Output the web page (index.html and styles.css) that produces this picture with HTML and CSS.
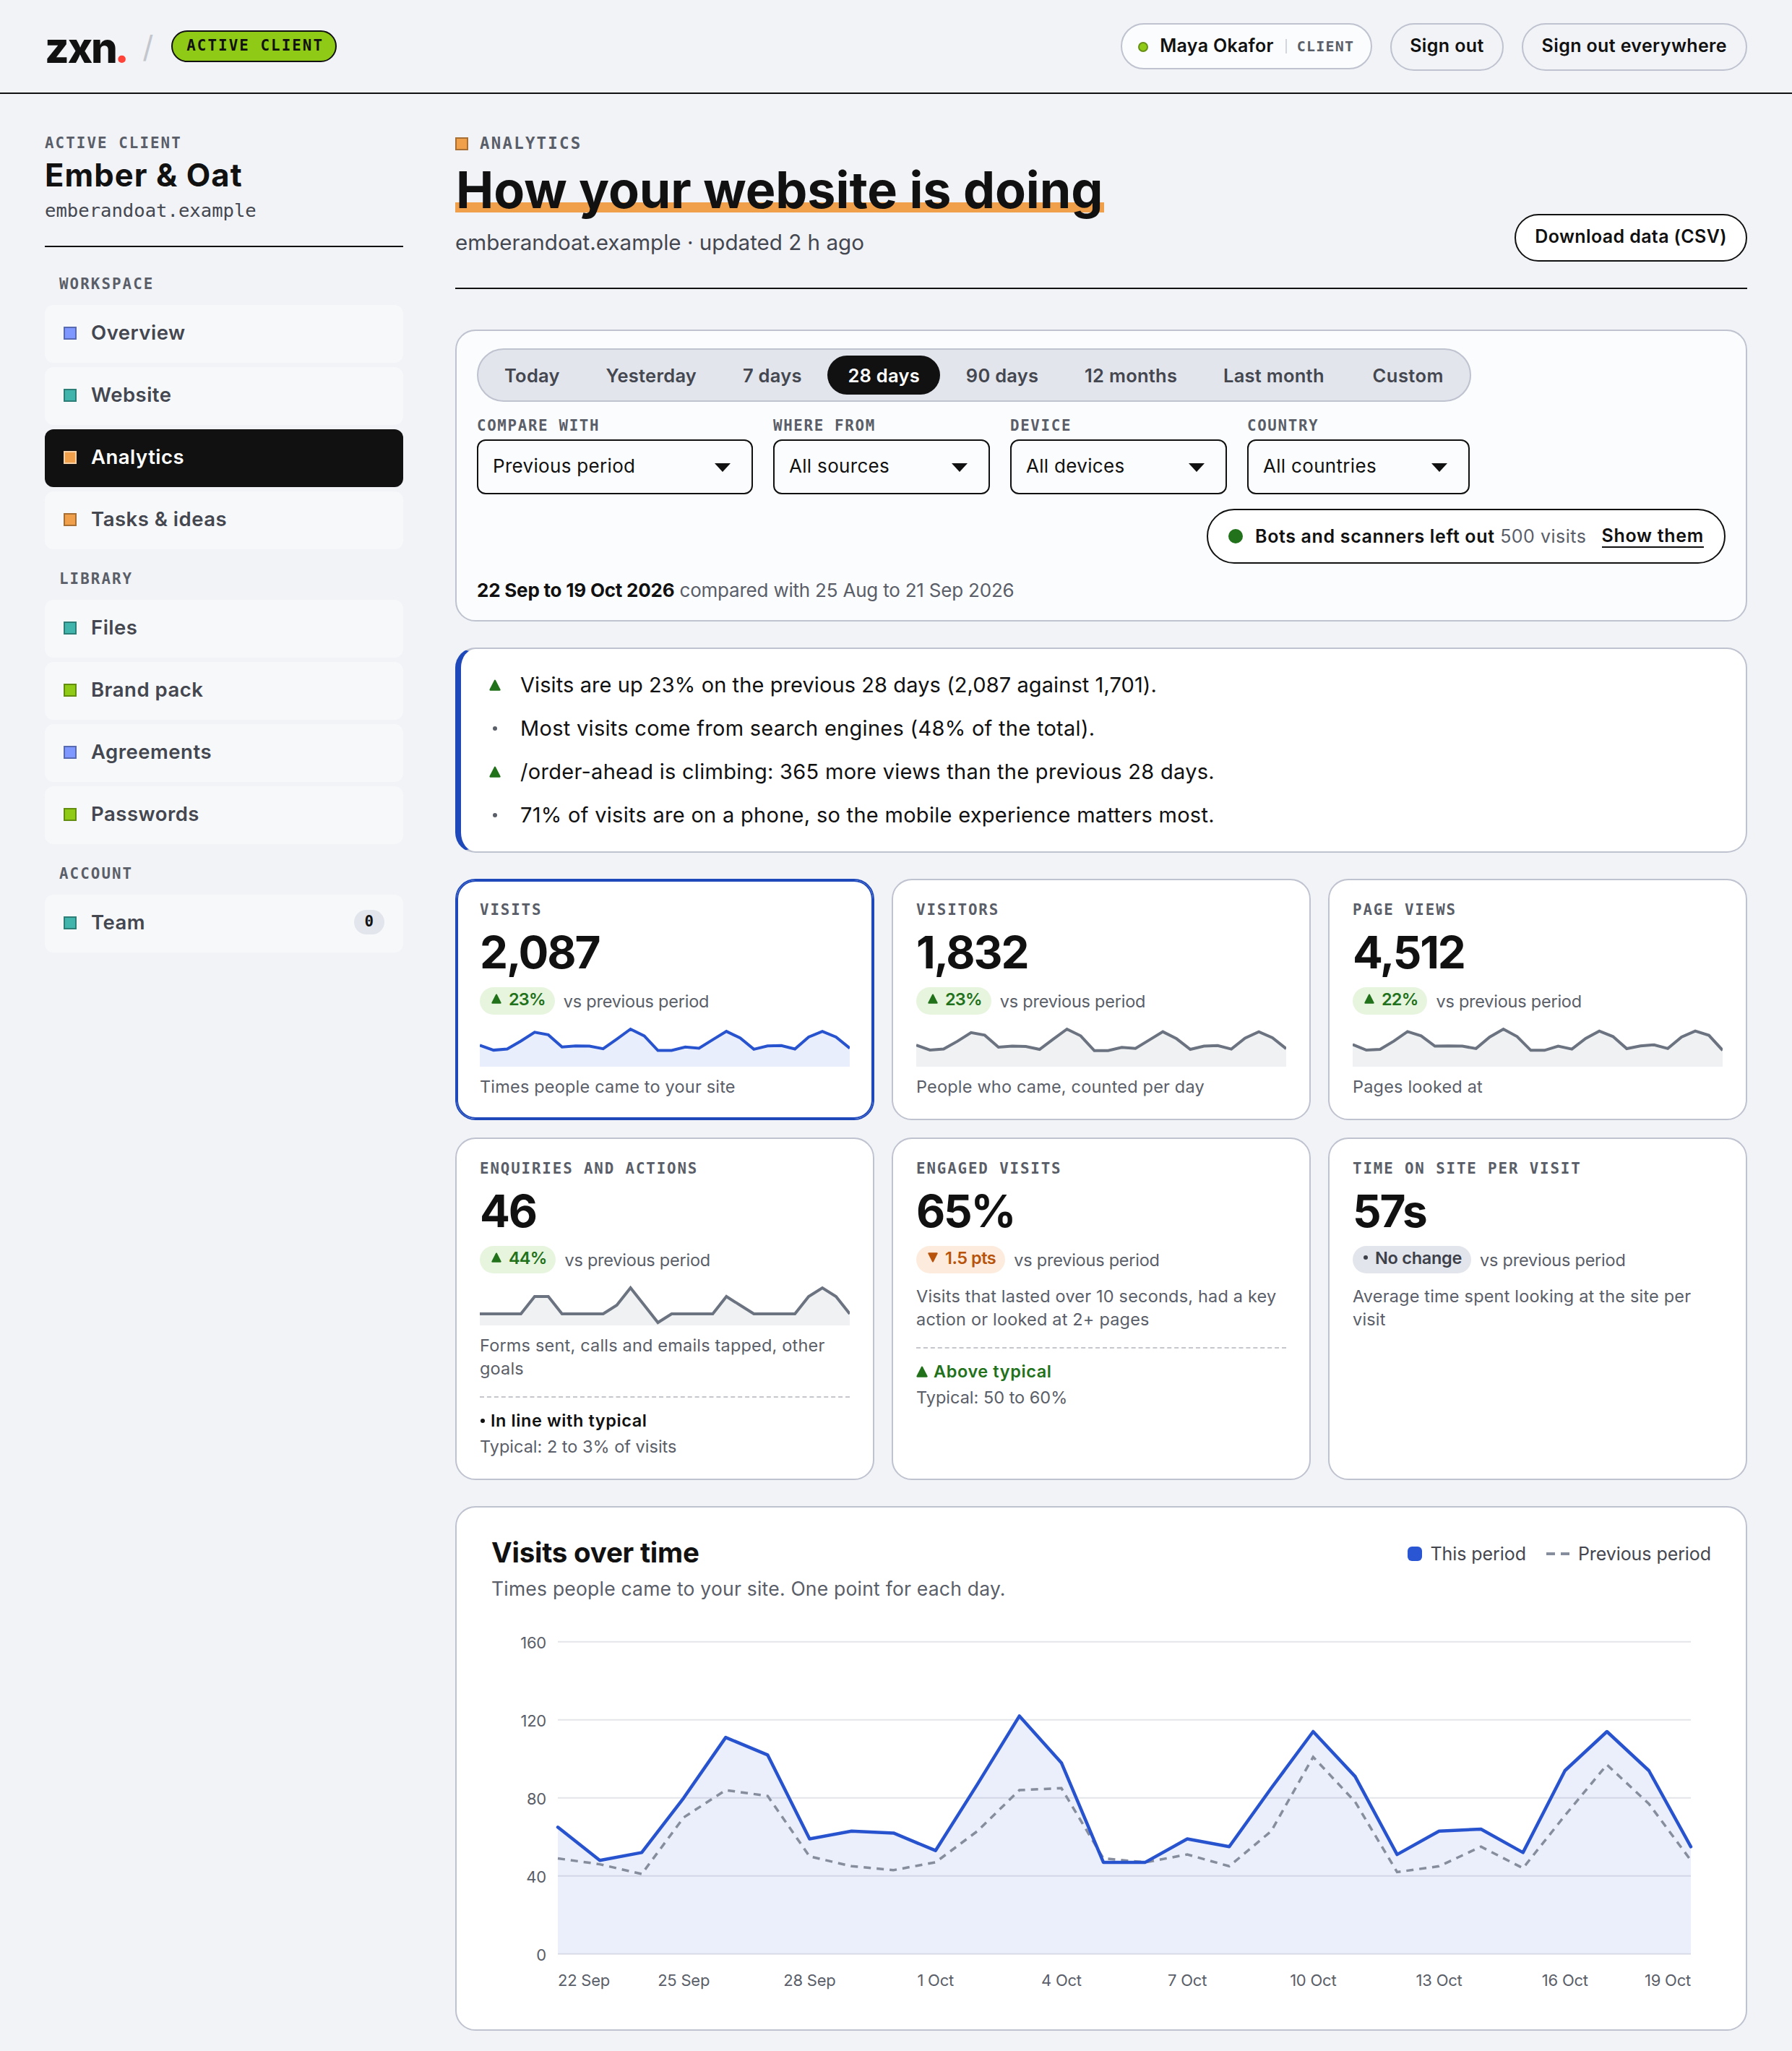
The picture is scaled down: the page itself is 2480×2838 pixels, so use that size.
FILE: index.html
```html
<!DOCTYPE html>
<html lang="en">
<head>
    <meta charset="UTF-8">
    <meta name="viewport" content="width=device-width, initial-scale=1.0">
    <title>Analytics - Ember &amp; Oat</title>
    <link rel="stylesheet" href="styles.css">
</head>
<body>
    <header class="topbar">
        <div class="brand">
            <span class="logo">zxn<span class="logo-dot">.</span></span>
            <span class="slash">/</span>
            <span class="status">ACTIVE CLIENT</span>
        </div>
        <div class="session">
            <div class="user">
                <span class="user-dot"></span>
                <span class="user-name">Maya Okafor</span>
                <span class="user-role">CLIENT</span>
            </div>
            <button class="pill slim">Sign out</button>
            <button class="pill">Sign out everywhere</button>
        </div>
    </header>

    <div class="layout">
        <aside class="sidebar">
            <div class="client">
                <p class="client-label">ACTIVE CLIENT</p>
                <p class="client-name">Ember &amp; Oat</p>
                <p class="client-domain">emberandoat.example</p>
            </div>
            <nav class="nav">
                <p class="nav-label">WORKSPACE</p>
                <a class="nav-item"><span class="square blue"></span>Overview</a>
                <a class="nav-item"><span class="square teal"></span>Website</a>
                <a class="nav-item active"><span class="square orange"></span>Analytics</a>
                <a class="nav-item"><span class="square orange"></span>Tasks &amp; ideas</a>
                <p class="nav-label">LIBRARY</p>
                <a class="nav-item"><span class="square teal"></span>Files</a>
                <a class="nav-item"><span class="square green"></span>Brand pack</a>
                <a class="nav-item"><span class="square blue"></span>Agreements</a>
                <a class="nav-item"><span class="square green"></span>Passwords</a>
                <p class="nav-label">ACCOUNT</p>
                <a class="nav-item"><span class="square teal"></span>Team<span class="count">0</span></a>
            </nav>
        </aside>

        <main class="main">
            <div class="page-head">
                <div>
                    <p class="eyebrow"><span class="square orange"></span>ANALYTICS</p>
                    <h1><span>How your website is doing</span></h1>
                    <p class="subtitle">emberandoat.example · updated 2 h ago</p>
                </div>
                <button class="pill dark">Download data (CSV)</button>
            </div>

            <section class="filters">
                <div class="segments">
                    <button>Today</button>
                    <button>Yesterday</button>
                    <button>7 days</button>
                    <button class="on">28 days</button>
                    <button>90 days</button>
                    <button>12 months</button>
                    <button>Last month</button>
                    <button>Custom</button>
                </div>
                <div class="fields">
                    <div class="field wide">
                        <span class="field-label">COMPARE WITH</span>
                        <div class="select">Previous period<svg width="22" height="12" viewBox="0 0 22 12"><path d="M0 0h22L11 12z"/></svg></div>
                    </div>
                    <div class="field">
                        <span class="field-label">WHERE FROM</span>
                        <div class="select">All sources<svg width="22" height="12" viewBox="0 0 22 12"><path d="M0 0h22L11 12z"/></svg></div>
                    </div>
                    <div class="field">
                        <span class="field-label">DEVICE</span>
                        <div class="select">All devices<svg width="22" height="12" viewBox="0 0 22 12"><path d="M0 0h22L11 12z"/></svg></div>
                    </div>
                    <div class="field country">
                        <span class="field-label">COUNTRY</span>
                        <div class="select">All countries<svg width="22" height="12" viewBox="0 0 22 12"><path d="M0 0h22L11 12z"/></svg></div>
                    </div>
                </div>
                <div class="bots">
                    <span class="bots-dot"></span>
                    <span class="bots-text"><strong>Bots and scanners left out</strong> 500 visits</span>
                    <a class="bots-link">Show them</a>
                </div>
                <p class="range"><strong>22 Sep to 19 Oct 2026</strong> compared with 25 Aug to 21 Sep 2026</p>
            </section>

            <ul class="insights">
                <li class="figures"><span class="marker"><svg class="tri" width="16" height="16" viewBox="0 0 14 14"><path d="M7 1.5 12.7 12.7H1.3z"/></svg></span>Visits are up 23% on the previous 28 days (2,087 against 1,701).</li>
                <li><span class="marker"><i class="bullet"></i></span>Most visits come from search engines (48% of the total).</li>
                <li><span class="marker"><svg class="tri" width="16" height="16" viewBox="0 0 14 14"><path d="M7 1.5 12.7 12.7H1.3z"/></svg></span>/order-ahead is climbing: 365 more views than the previous 28 days.</li>
                <li><span class="marker"><i class="bullet"></i></span>71% of visits are on a phone, so the mobile experience matters most.</li>
            </ul>

            <section class="cards">
                <article class="card selected">
                    <p class="card-label">VISITS</p>
                    <p class="number">2,087</p>
                    <p class="delta"><span class="chip up"><svg class="tri" width="14" height="14" viewBox="0 0 14 14"><path d="M7 1.5 12.7 12.7H1.3z"/></svg>23%</span>vs previous period</p>
                    <svg class="spark" id="spark-visits" viewBox="0 0 512 56"></svg>
                    <p class="desc">Times people came to your site</p>
                </article>
                <article class="card">
                    <p class="card-label">VISITORS</p>
                    <p class="number">1,832</p>
                    <p class="delta"><span class="chip up"><svg class="tri" width="14" height="14" viewBox="0 0 14 14"><path d="M7 1.5 12.7 12.7H1.3z"/></svg>23%</span>vs previous period</p>
                    <svg class="spark" id="spark-visitors" viewBox="0 0 512 56"></svg>
                    <p class="desc">People who came, counted per day</p>
                </article>
                <article class="card">
                    <p class="card-label">PAGE VIEWS</p>
                    <p class="number">4,512</p>
                    <p class="delta"><span class="chip up"><svg class="tri" width="14" height="14" viewBox="0 0 14 14"><path d="M7 1.5 12.7 12.7H1.3z"/></svg>22%</span>vs previous period</p>
                    <svg class="spark" id="spark-views" viewBox="0 0 512 56"></svg>
                    <p class="desc">Pages looked at</p>
                </article>
                <article class="card">
                    <p class="card-label">ENQUIRIES AND ACTIONS</p>
                    <p class="number">46</p>
                    <p class="delta"><span class="chip up"><svg class="tri" width="14" height="14" viewBox="0 0 14 14"><path d="M7 1.5 12.7 12.7H1.3z"/></svg>44%</span>vs previous period</p>
                    <svg class="spark" id="spark-actions" viewBox="0 0 512 56"></svg>
                    <p class="desc">Forms sent, calls and emails tapped, other goals</p>
                    <div class="typical">
                        <p class="verdict"><i class="bullet"></i>In line with typical</p>
                        <p>Typical: 2 to 3% of visits</p>
                    </div>
                </article>
                <article class="card">
                    <p class="card-label">ENGAGED VISITS</p>
                    <p class="number">65%</p>
                    <p class="delta"><span class="chip down"><svg class="tri" width="14" height="14" viewBox="0 0 14 14"><path d="M7 12.5 12.7 1.3H1.3z"/></svg>1.5 pts</span>vs previous period</p>
                    <p class="desc after-delta">Visits that lasted over 10 seconds, had a key action or looked at 2+ pages</p>
                    <div class="typical">
                        <p class="verdict good"><svg class="tri" width="16" height="16" viewBox="0 0 14 14"><path d="M7 1.5 12.7 12.7H1.3z"/></svg>Above typical</p>
                        <p>Typical: 50 to 60%</p>
                    </div>
                </article>
                <article class="card">
                    <p class="card-label">TIME ON SITE PER VISIT</p>
                    <p class="number">57s</p>
                    <p class="delta"><span class="chip flat"><i class="bullet"></i>No change</span>vs previous period</p>
                    <p class="desc after-delta">Average time spent looking at the site per visit</p>
                </article>
            </section>

            <section class="chart-card">
                <div class="chart-head">
                    <div>
                        <h2>Visits over time</h2>
                        <p class="chart-sub">Times people came to your site. One point for each day.</p>
                    </div>
                    <div class="legend">
                        <span class="legend-square"></span>This period
                        <svg class="legend-dash" width="32" height="4" viewBox="0 0 32 4"><path d="M0 2h12M20 2h12"/></svg>Previous period
                    </div>
                </div>
                <svg class="chart" id="chart" viewBox="0 0 1688 530"></svg>
            </section>
        </main>
    </div>

    <script>
        const visits = [65, 48, 52, 80, 111, 102, 59, 63, 62, 53, 87, 122, 98, 47, 47, 59, 55, 85, 114, 91, 51, 63, 64, 52, 94, 114, 94, 55];
        const previous = [49, 46, 41, 70, 84, 81, 50, 45, 43, 47, 63, 84, 85, 49, 47, 51, 45, 63, 101, 78, 42, 45, 55, 44, 71, 97, 77, 48];
        const visitors = [58, 43, 46, 70, 97, 89, 52, 55, 54, 45, 77, 108, 87, 41, 41, 51, 48, 74, 100, 78, 45, 55, 57, 46, 80, 100, 81, 47];
        const views = [140, 100, 105, 165, 234, 203, 128, 130, 128, 111, 195, 252, 198, 98, 98, 128, 107, 184, 238, 198, 110, 130, 138, 111, 195, 238, 207, 98];
        const actions = [1, 1, 1, 1, 3, 3, 1, 1, 1, 1, 2, 4, 2, 0, 1, 1, 1, 1, 3, 2, 1, 1, 1, 1, 3, 4, 3, 1];

        // Small area line inside a card
        function drawSpark(id, data) {
            const max = Math.max(...data);
            const points = data.map((v, i) => `${(i * 512 / 27).toFixed(1)},${(52 - v / max * 48).toFixed(1)}`);
            document.getElementById(id).innerHTML =
                `<polygon class="area" points="0,56 ${points.join(" ")} 512,56"/><polyline class="line" points="${points.join(" ")}"/>`;
        }

        // Main chart
        function drawChart() {
            const x = i => (92 + i * 1568 / 27).toFixed(1);
            const y = v => (463.8 - v * 2.7).toFixed(1);
            const line = data => data.map((v, i) => `${x(i)},${y(v)}`).join(" ");
            const labels = ["22 Sep", "25 Sep", "28 Sep", "1 Oct", "4 Oct", "7 Oct", "10 Oct", "13 Oct", "16 Oct", "19 Oct"];
            let svg = "";

            for (let v = 0; v <= 160; v += 40) {
                svg += `<line class="grid" x1="92" x2="1660" y1="${y(v)}" y2="${y(v)}"/>`;
                svg += `<text x="76" y="${+y(v) + 9}" text-anchor="end">${v}</text>`;
            }
            labels.forEach((label, i) => {
                const anchor = i === 0 ? "start" : i === 9 ? "end" : "middle";
                svg += `<text x="${x(i * 3)}" y="508" text-anchor="${anchor}">${label}</text>`;
            });
            svg += `<polygon class="area" points="92,463.8 ${line(visits)} 1660,463.8"/>`;
            svg += `<polyline class="previous" points="${line(previous)}"/>`;
            svg += `<polyline class="line" points="${line(visits)}"/>`;
            document.getElementById("chart").innerHTML = svg;
        }

        drawSpark("spark-visits", visits);
        drawSpark("spark-visitors", visitors);
        drawSpark("spark-views", views);
        drawSpark("spark-actions", actions);
        drawChart();
    </script>
</body>
</html>
```

FILE: styles.css
```css
* {
    box-sizing: border-box;
}
body {
    margin: 0;
    background-color: #f1f3f7;
    color: #111;
    font-family: Inter, "Liberation Sans", sans-serif;
    font-size: 24px;
}
p, h1, h2, ul {
    margin: 0;
    padding: 0;
}
button {
    font-family: inherit;
    color: inherit;
    white-space: nowrap;
}

/* Top bar */
.topbar {
    display: flex;
    justify-content: space-between;
    height: 130px;
    padding: 32px 62px 30px;
    border-bottom: 2px solid #111;
}
.brand {
    display: flex;
    align-items: center;
}
.logo {
    padding-top: 2px;
    font-size: 58px;
    font-weight: 800;
    line-height: 66px;
    letter-spacing: -0.035em;
}
.logo-dot {
    color: #ff4338;
    font-family: Lato, sans-serif;
    font-weight: 900;
    font-size: 64px;
    line-height: 1px;
}
.slash {
    margin: 0 25px 0 23px;
    color: #c3c6cc;
    font-size: 42px;
    line-height: 60px;
}
.status {
    height: 44px;
    margin-top: -2px;
    padding: 0 16px 0 19px;
    border: 2px solid #111;
    border-radius: 22px;
    background-color: #8fcb16;
    font: bold 20.8px/38px "DejaVu Sans Mono", monospace;
    letter-spacing: 0.1em;
}
.session {
    display: flex;
    align-items: flex-start;
    gap: 25px;
}
.user {
    display: flex;
    align-items: center;
    height: 64px;
    padding: 0 23px 0 22px;
    border: 2px solid #bfc2cf;
    border-radius: 32px;
    background-color: #fbfcfd;
}
.user-dot {
    width: 14px;
    height: 14px;
    margin: 2px 16px 0 0;
    border: 2px solid #669016;
    border-radius: 50%;
    background-color: #8fcb16;
}
.user-name {
    padding-bottom: 2px;
    font-size: 25px;
    font-weight: 600;
    letter-spacing: 0.012em;
    line-height: 58px;
}
.user-role {
    margin-left: 16px;
    padding-left: 14px;
    border-left: 2px solid #d3d6dd;
    color: #5a5e68;
    font: bold 20px/20px "DejaVu Sans Mono", monospace;
    letter-spacing: 0.06em;
}
.pill {
    height: 66px;
    padding: 0 26px 4px;
    border: 2px solid #bfc2cf;
    border-radius: 33px;
    background-color: transparent;
    font-size: 25px;
    font-weight: 600;
    letter-spacing: 0.015em;
}
.pill.slim {
    padding: 0 25px 4px;
}
.pill.dark {
    border-color: #111;
    background-color: #fff;
}

.layout {
    display: grid;
    grid-template-columns: 496px 1788px;
    column-gap: 72px;
    padding: 50px 62px 28px;
}

/* Sidebar */
.client {
    height: 162px;
    border-bottom: 2px solid #111;
}
.client-label {
    color: #5a5e68;
    font: bold 20.8px/37px "DejaVu Sans Mono", monospace;
    letter-spacing: 0.1em;
}
.client-name {
    font-size: 43.5px;
    font-weight: 700;
    line-height: 51px;
    letter-spacing: 0.025em;
}
.client-domain {
    color: #44474f;
    font: 25.6px/46px "DejaVu Sans Mono", monospace;
}
.nav {
    display: flex;
    flex-direction: column;
    gap: 6px;
    padding-top: 10px;
}
.nav-label {
    height: 64px;
    padding: 25px 20px 7px;
    color: #5a5e68;
    font: bold 20.8px/32px "DejaVu Sans Mono", monospace;
    letter-spacing: 0.1em;
}
.nav-item + .nav-label {
    margin-top: -6px;
}
.nav-item {
    display: flex;
    align-items: center;
    height: 80px;
    padding: 0 26px 4px;
    border-radius: 12px;
    background-color: #f6f8fa;
    color: #44474f;
    font-size: 27.5px;
    font-weight: 600;
    letter-spacing: 0.018em;
}
.nav-item .square {
    margin-top: 1px;
    margin-right: 20px;
}
.nav-item.active {
    background-color: #111;
    color: #fff;
}
.square {
    width: 18px;
    height: 18px;
    border: 2px solid rgba(0, 0, 0, 0.3);
}
.active .square {
    border-color: rgba(255, 255, 255, 0.5);
}
.blue {
    background-color: #7e98ff;
}
.teal {
    background-color: #41b5ab;
}
.orange {
    background-color: #f0a04b;
}
.green {
    background-color: #8fcb16;
}
.count {
    width: 42px;
    height: 34px;
    margin-left: auto;
    border-radius: 17px;
    background-color: #e2e5ec;
    color: #111;
    font: bold 20.8px/33px "DejaVu Sans Mono", monospace;
    text-align: center;
}

/* Page head */
.page-head {
    display: flex;
    justify-content: space-between;
    align-items: flex-end;
    height: 220px;
    padding-bottom: 36px;
    border-bottom: 2px solid #111;
}
.eyebrow {
    display: flex;
    align-items: center;
    gap: 16px;
    color: #5a5e68;
    font: bold 22.4px/35px "DejaVu Sans Mono", monospace;
    letter-spacing: 0.1em;
}
h1 {
    margin-top: 7px;
    font-size: 70px;
    font-weight: 700;
    line-height: 80px;
    letter-spacing: -0.001em;
}
h1 span {
    display: inline-block;
    width: 898px;
    padding-left: 1px;
    background: linear-gradient(#f0a04b, #f0a04b) 0 57px / 100% 14px no-repeat;
    white-space: nowrap;
}
.subtitle {
    margin: 12px 0 7px;
    color: #44474f;
    font-size: 29.6px;
    line-height: 40px;
}

/* Filters */
.filters {
    height: 404px;
    margin-top: 56px;
    padding: 24px 28px;
    border: 2px solid #bfc2cf;
    border-radius: 28px;
    background-color: #fbfcfd;
}
.segments {
    display: flex;
    justify-content: space-between;
    width: 1376px;
    height: 74px;
    padding: 8px;
    border: 2px solid #bfc2cf;
    border-radius: 37px;
    background-color: #e2e5ec;
}
.segments button {
    padding: 0 28px;
    border: none;
    border-radius: 27px;
    background: none;
    color: #44474f;
    font-size: 25.5px;
    font-weight: 600;
    letter-spacing: 0.01em;
}
.segments .on {
    background-color: #111;
    color: #fff;
}
.segments button:last-child {
    padding-left: 31px;
    letter-spacing: 0.018em;
}
.fields {
    display: flex;
    gap: 28px;
    margin-top: 20px;
}
.field {
    width: 300px;
}
.field.wide {
    width: 382px;
}
.field.country {
    width: 308px;
}
.field-label {
    display: block;
    margin-bottom: 6px;
    color: #5a5e68;
    font: bold 20.8px/26px "DejaVu Sans Mono", monospace;
    letter-spacing: 0.08em;
}
.select {
    display: flex;
    align-items: center;
    justify-content: space-between;
    height: 76px;
    padding: 0 29px 3px 20px;
    border: 2px solid #111;
    border-radius: 12px;
    font-size: 26px;
    letter-spacing: 0.012em;
}
.select svg {
    margin-top: 5px;
    fill: #111;
}
.bots {
    display: flex;
    align-items: center;
    width: 718px;
    height: 76px;
    margin: 20px 0 0 auto;
    padding: 0 28px;
    border: 2px solid #111;
    border-radius: 38px;
    background-color: #fff;
    font-size: 25px;
    white-space: nowrap;
}
.bots-dot {
    width: 20px;
    height: 20px;
    margin-right: 17px;
    border-radius: 50%;
    background-color: #22711b;
}
.bots-text {
    color: #5a5e68;
    letter-spacing: 0.02em;
}
.bots-text strong {
    color: #111;
    font-weight: 600;
    letter-spacing: 0.026em;
}
.bots-link {
    margin-left: auto;
    border-bottom: 2px solid #111;
    font-weight: 600;
    line-height: 29px;
    letter-spacing: 0.028em;
}
.range {
    margin-top: 17px;
    color: #5a5e68;
    font-size: 26px;
    line-height: 40px;
    letter-spacing: -0.008em;
}
.range strong {
    color: #111;
    font-weight: 700;
}

/* Insights */
.insights {
    margin-top: 36px;
    padding: 19px 36px 21px;
    border: 2px solid #bfc2cf;
    border-left: 8px solid #1f49bb;
    border-radius: 28px;
    background-color: #fff;
    list-style: none;
}
.insights li {
    display: flex;
    align-items: center;
    height: 60px;
    font-size: 29px;
    letter-spacing: 0.01em;
}
.insights .figures {
    letter-spacing: 0.003em;
}
.marker {
    display: flex;
    justify-content: center;
    width: 22px;
    margin: 2px 24px 0 0;
}
.tri {
    fill: #22711b;
    stroke: #22711b;
    stroke-width: 2;
    stroke-linejoin: round;
}
.bullet {
    width: 6px;
    height: 6px;
    border-radius: 50%;
    background-color: #5a5e68;
}

/* Cards */
.cards {
    display: grid;
    grid-template-columns: repeat(3, 1fr);
    grid-template-rows: 334px 474px;
    gap: 24px;
    margin-top: 36px;
}
.card {
    padding: 23px 32px;
    border: 2px solid #bfc2cf;
    border-radius: 28px;
    background-color: #fff;
    color: #5a5e68;
}
.card.selected {
    border-color: #1f49bb;
    box-shadow: inset 0 0 0 2px #1f49bb;
}
.card-label {
    font: bold 20.8px/36px "DejaVu Sans Mono", monospace;
    letter-spacing: 0.09em;
}
.number {
    margin-top: 6px;
    color: #111;
    font-size: 62px;
    font-weight: 700;
    line-height: 70px;
    letter-spacing: -0.035em;
}
.delta {
    display: flex;
    align-items: center;
    gap: 12px;
    margin-top: 13px;
    font-size: 23.5px;
    letter-spacing: -0.01em;
}
.chip {
    display: flex;
    align-items: center;
    gap: 10px;
    height: 38px;
    padding: 0 13px 6px 16px;
    border-radius: 19px;
    font-weight: 600;
    letter-spacing: -0.035em;
}
.chip.up {
    background-color: #e7f5df;
    color: #22711b;
}
.chip.down {
    background-color: #fdecdd;
    color: #b8530c;
    letter-spacing: -0.02em;
}
.chip.down .tri {
    fill: #b8530c;
    stroke: #b8530c;
}
.chip.flat {
    padding-left: 15px;
    background-color: #e2e5ec;
    color: #3d4048;
    letter-spacing: -0.012em;
}
.chip .bullet {
    background-color: #3d4048;
}
.spark {
    display: block;
    width: 512px;
    height: 56px;
    margin-top: 16px;
}
.spark .area {
    fill: #eff1f2;
}
.spark .line {
    fill: none;
    stroke: #6b7280;
    stroke-width: 4;
}
.selected .area {
    fill: #e9eefc;
}
.selected .line {
    stroke: #2853cf;
}
.desc {
    margin-top: 12px;
    font-size: 23.5px;
    line-height: 32.4px;
    letter-spacing: 0.008em;
}
.desc.after-delta {
    margin-top: 16px;
}
.typical {
    margin-top: 21px;
    padding-top: 14px;
    border-top: 2px dashed #c5c7cd;
    font-size: 23.5px;
    line-height: 36px;
}
.verdict {
    display: flex;
    align-items: center;
    gap: 8px;
    color: #111;
    font-weight: 600;
    letter-spacing: 0.025em;
}
.verdict .bullet {
    margin-left: 1px;
    background-color: #111;
}
.verdict.good {
    color: #22711b;
}

/* Visits over time */
.chart-card {
    height: 726px;
    margin-top: 36px;
    padding: 38px 48px 0;
    border: 2px solid #bfc2cf;
    border-radius: 28px;
    background-color: #fff;
}
.chart-head {
    display: flex;
    justify-content: space-between;
    align-items: flex-start;
}
h2 {
    font-size: 38.5px;
    font-weight: 700;
    line-height: 48px;
    letter-spacing: -0.006em;
}
.chart-sub {
    margin-top: 4px;
    color: #5a5e68;
    font-size: 26.5px;
    line-height: 44px;
    letter-spacing: 0.008em;
}
.legend {
    display: flex;
    align-items: center;
    height: 51px;
    color: #44474f;
    font-size: 25px;
    letter-spacing: -0.003em;
}
.legend-square {
    width: 20px;
    height: 20px;
    margin-right: 12px;
    border-radius: 6px;
    background-color: #2a55d3;
}
.legend-dash {
    margin: 0 12px 0 28px;
    stroke: #868d9c;
    stroke-width: 4;
}
.chart {
    display: block;
    width: 1688px;
    height: 530px;
    margin-top: 20px;
}
.chart text {
    fill: #5a5e68;
    font-size: 22px;
    letter-spacing: -0.01em;
}
.chart .grid {
    stroke: #e3e5e8;
    stroke-width: 2;
}
.chart .area {
    fill: #2a55d3;
    fill-opacity: 0.095;
}
.chart .line {
    fill: none;
    stroke: #2853cf;
    stroke-width: 4.5;
    stroke-linejoin: round;
    stroke-linecap: round;
}
.chart .previous {
    fill: none;
    stroke: #868d9c;
    stroke-width: 3.5;
    stroke-dasharray: 10 8;
}
```
